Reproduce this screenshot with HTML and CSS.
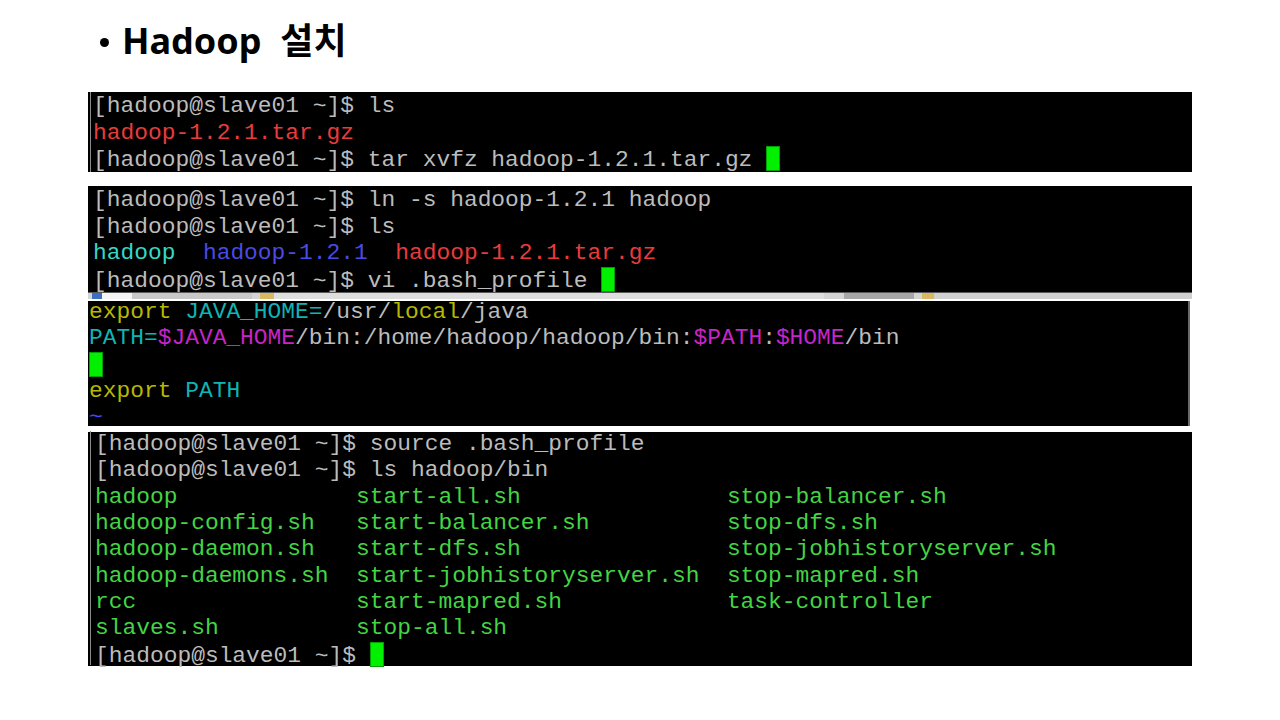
FILE: index.html
```html
<!DOCTYPE html>
<html lang="ko">
<head>
<meta charset="utf-8">
<title>Hadoop 설치</title>
<link rel="stylesheet" href="styles.css">
</head>
<body>
<div class="slide">
  <h1 class="title"><span class="bullet"></span><span class="title-text">Hadoop&nbsp;&nbsp;설치</span></h1>

  <div class="term t1">
    <div class="edge">
<pre class="lines"><span class="p">[hadoop@slave01 ~]$ ls</span>
<span class="red">hadoop-1.2.1.tar.gz</span>
<span class="p">[hadoop@slave01 ~]$ tar xvfz hadoop-1.2.1.tar.gz </span><span class="cursor"></span></pre>
    </div>
  </div>

  <div class="term-wrap t2">
    <div class="term t2-inner">
<pre class="lines pad5"><span class="p">[hadoop@slave01 ~]$ ln -s hadoop-1.2.1 hadoop</span>
<span class="p">[hadoop@slave01 ~]$ ls</span>
<span class="cyan">hadoop</span>  <span class="blue">hadoop-1.2.1</span>  <span class="red">hadoop-1.2.1.tar.gz</span>
<span class="p">[hadoop@slave01 ~]$ vi .bash_profile </span><span class="cursor"></span></pre>
    </div>
    <div class="strip">
      <span class="s-blue"></span><span class="s-white"></span><span class="s-gray"></span><span class="s-yellow"></span><span class="s-light"></span><span class="s-dark"></span><span class="s-yellow2"></span><span class="s-rest"></span>
    </div>
  </div>

  <div class="term t3">
<pre class="lines pad1"><span class="ol">export</span> <span class="cy">JAVA_HOME=</span><span class="p">/usr/</span><span class="ol">local</span><span class="p">/java</span>
<span class="cy">PATH=</span><span class="mg">$JAVA_HOME</span><span class="p">/bin:/home/hadoop/hadoop/bin:</span><span class="mg">$PATH</span><span class="p">:</span><span class="mg">$HOME</span><span class="p">/bin</span>
<span class="cursor vi"></span>
<span class="ol">export</span> <span class="cy">PATH</span>
<span class="tilde">~</span></pre>
  </div>

  <div class="term t4">
    <div class="edge">
<pre class="lines pad4"><span class="p">[hadoop@slave01 ~]$ source .bash_profile</span>
<span class="p">[hadoop@slave01 ~]$ ls hadoop/bin</span>
<span class="green">hadoop             start-all.sh               stop-balancer.sh
hadoop-config.sh   start-balancer.sh          stop-dfs.sh
hadoop-daemon.sh   start-dfs.sh               stop-jobhistoryserver.sh
hadoop-daemons.sh  start-jobhistoryserver.sh  stop-mapred.sh
rcc                start-mapred.sh            task-controller
slaves.sh          stop-all.sh</span>
<span class="p">[hadoop@slave01 ~]$ </span><span class="cursor"></span></pre>
    </div>
  </div>
</div>
</body>
</html>
```

FILE: styles.css
```css
html, body {
  margin: 0;
  padding: 0;
  background: #ffffff;
}

.slide {
  width: 1280px;
  height: 720px;
  display: flex;
  flex-direction: column;
  align-items: flex-start;
}

.title {
  margin: 0;
  box-sizing: border-box;
  padding: 17px 0 0 100px;
  display: flex;
  align-items: center;
  align-self: flex-start;
  font-family: "Noto Sans", "Noto Sans CJK KR", sans-serif;
  font-weight: 700;
  font-size: 36px;
  line-height: 48px;
  height: 65px;
  color: #000;
}

.bullet {
  display: block;
  width: 9px;
  height: 9px;
  border-radius: 50%;
  background: #000;
  margin-right: 13px;
  margin-top: 2px;
}

.term {
  background: #000;
  margin-left: 88px;
  width: 1104px;
  box-sizing: border-box;
}

.t1 {
  margin-top: 27px;
  height: 80px;
}

.lines {
  margin: 0;
  font-family: "Courier New", "Nimbus Mono PS", "FreeMono", "Liberation Mono", monospace;
  font-size: 22.9px;
  line-height: 26.5px;
  color: #bcbcbc;
  white-space: pre;
}

.edge {
  margin-left: 2px;
  border-left: 1px solid #8a8a8a;
  padding-left: 2px;
  height: 100%;
  box-sizing: border-box;
}

.t1 .lines {
  padding-top: 1px;
}

.term-wrap.t2 {
  margin-top: 14px;
  margin-left: 88px;
  width: 1104px;
  display: flex;
  flex-direction: column;
}

.t2-inner {
  margin-left: 0;
  height: 106px;
}

.t2-inner .lines {
  padding-top: 1px;
}

.pad5 {
  padding-left: 5px;
}

.strip {
  height: 6px;
  display: flex;
  background: #d4d4d4;
  border-top: 1px solid #5a5a5a;
}

.strip span {
  display: block;
  height: 100%;
}

.s-blue { width: 10px; background: #3a6fc4; margin-left: 4px; }
.s-white { width: 30px; background: #f4f4f4; }
.s-gray { width: 120px; background: #c8c8c8; }
.s-yellow { width: 14px; background: #d8b860; margin-left: 8px; }
.s-light { width: 550px; background: #dedede; }
.s-dark { width: 70px; background: #a8a8a8; margin-left: 20px; }
.s-yellow2 { width: 12px; background: #d8b860; margin-left: 8px; }
.s-rest { flex: 1; background: #d0d0d0; }

.t3 {
  margin-top: 2px;
  width: 1102px;
  height: 125px;
  border-right: 2px solid #6a6a6a;
}

.t3 .lines {
  line-height: 25.8px;
  margin-top: -1px;
}

.pad1 {
  padding-left: 1px;
}

.t4 {
  margin-top: 6px;
  height: 234px;
}

.t4 .lines {
  line-height: 26.35px;
  margin-top: -1px;
}

.pad4 {
  padding-left: 2px;
}

.p { color: #bcbcbc; }
.red { color: #e83c3c; }
.green { color: #44d444; }
.cyan { color: #34d8c8; }
.blue { color: #4a4ae6; }
.ol { color: #b8b800; }
.cy { color: #10b4b4; }
.mg { color: #c824c8; }
.tilde { color: #4848f0; }

.cursor {
  display: inline-block;
  width: 12px;
  height: 23px;
  background: #00f000;
  border: 1px solid #00a000;
  vertical-align: -5px;
}
```
